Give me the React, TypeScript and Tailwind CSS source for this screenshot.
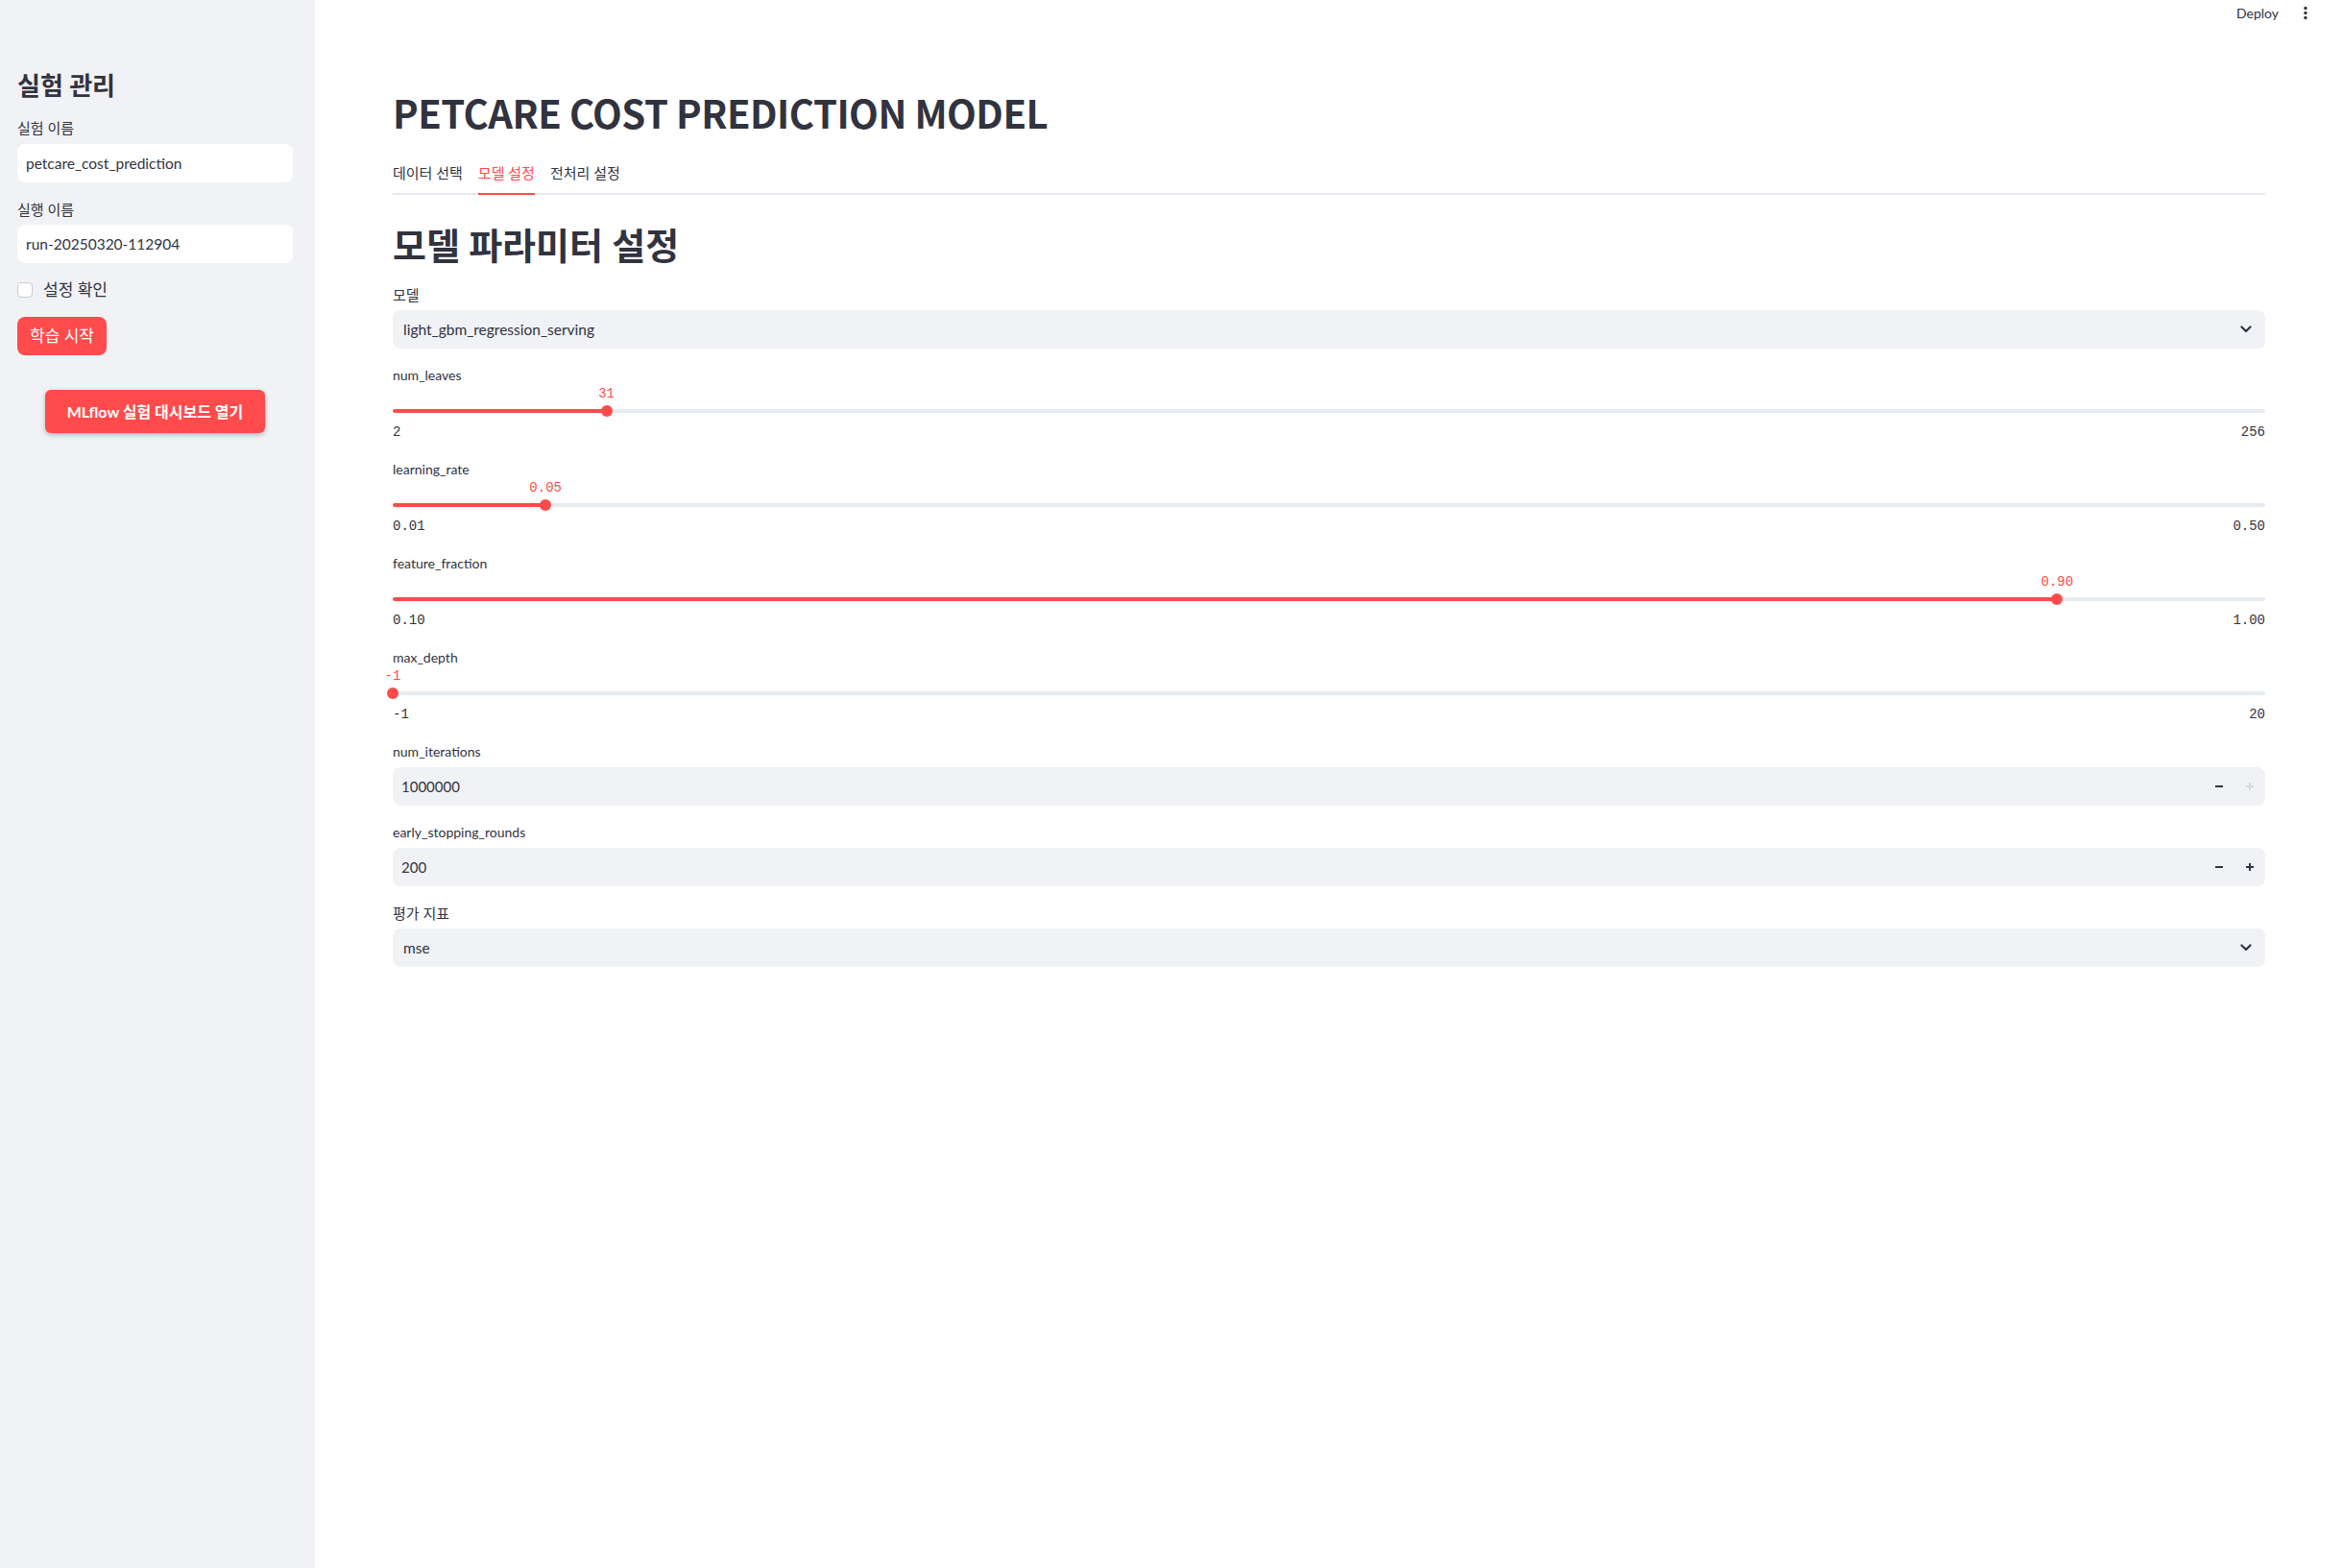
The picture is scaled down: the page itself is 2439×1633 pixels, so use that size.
import React from "react";

type SliderDef = {
  name: string;
  value: string;
  min: string;
  max: string;
  pct: number;
};

const sliders: SliderDef[] = [
  { name: "num_leaves", value: "31", min: "2", max: "256", pct: (31 - 2) / (256 - 2) },
  { name: "learning_rate", value: "0.05", min: "0.01", max: "0.50", pct: (0.05 - 0.01) / (0.5 - 0.01) },
  { name: "feature_fraction", value: "0.90", min: "0.10", max: "1.00", pct: (0.9 - 0.1) / (1 - 0.1) },
  { name: "max_depth", value: "-1", min: "-1", max: "20", pct: 0 },
];

const tabs = ["데이터 선택", "모델 설정", "전처리 설정"];

function Chevron() {
  return (
    <svg width="12" height="8" viewBox="0 0 12 8" fill="none">
      <path d="M1.5 1.5 6 6l4.5-4.5" stroke="#31333f" strokeWidth="2.2" strokeLinecap="round" strokeLinejoin="round" />
    </svg>
  );
}

function Minus({ color = "#31333f" }: { color?: string }) {
  return (
    <svg width="10" height="10" viewBox="0 0 10 10">
      <rect x="1" y="4" width="8" height="2" fill={color} />
    </svg>
  );
}

function Plus({ color = "#31333f" }: { color?: string }) {
  return (
    <svg width="10" height="10" viewBox="0 0 10 10">
      <rect x="1" y="4" width="8" height="2" fill={color} />
      <rect x="4" y="1" width="2" height="8" fill={color} />
    </svg>
  );
}

// korean labels run a bit wider in the reference than latin ones
function Label({ children, ko }: { children: React.ReactNode; ko?: boolean }) {
  return (
    <div
      className={
        ko
          ? "h-[20px] flex items-center text-[15px] leading-[20px] text-[#31333f]"
          : "h-[20px] flex items-center text-[14px] leading-[20px] text-[#31333f]"
      }
    >
      {children}
    </div>
  );
}

function SelectBox({ value }: { value: string }) {
  return (
    <div className="h-[40px] flex items-center justify-between rounded-lg bg-[#f0f2f6] pl-[11px] pr-[14px] mt-[6px]">
      <span className="text-[15.5px] leading-[20px] text-[#31333f]">{value}</span>
      <Chevron />
    </div>
  );
}

function NumberBox({ value, plusDisabled }: { value: string; plusDisabled?: boolean }) {
  return (
    <div className="h-[40px] flex items-center rounded-lg bg-[#f0f2f6] pl-[9px] mt-[6px]">
      <span className="flex-1 text-[15px] leading-[20px] text-[#31333f]">{value}</span>
      <div className="w-[32px] h-full flex items-center justify-center">
        <Minus />
      </div>
      <div className="w-[32px] h-full flex items-center justify-center">
        <Plus color={plusDisabled ? "#d5d8e0" : "#31333f"} />
      </div>
    </div>
  );
}

function Slider({ s }: { s: SliderDef }) {
  const left = `${s.pct * 100}%`;
  return (
    <div className="flex flex-col">
      <Label>{s.name}</Label>
      <div className="relative h-[16px]">
        <span
          className="absolute top-[1px] -translate-x-1/2 font-['Liberation_Mono',monospace] text-[14px] leading-[16px] text-[#ff4b4b] whitespace-nowrap"
          style={{ left }}
        >
          {s.value}
        </span>
      </div>
      <div className="h-[21px] flex items-center">
        <div className="relative h-[4px] w-full rounded-full bg-[#e6eaf1]">
          <div className="absolute left-0 top-0 h-full rounded-full bg-[#ff4b4b]" style={{ width: left }} />
          <div
            className="absolute top-1/2 size-[12px] -translate-x-1/2 -translate-y-1/2 rounded-full bg-[#ff4b4b]"
            style={{ left }}
          />
        </div>
      </div>
      <div className="h-[23px] flex items-center justify-between font-['Liberation_Mono',monospace] text-[14px] leading-[16px] text-[#31333f]">
        <span>{s.min}</span>
        <span>{s.max}</span>
      </div>
    </div>
  );
}

function Sidebar() {
  return (
    <aside className="w-[328px] shrink-0 bg-[#f0f2f6] pl-[18px] pr-[23px] pt-[71px] flex flex-col">
      <h2 className="h-[36px] flex items-center text-[26px] leading-[36px] font-bold text-[#31333f]">실험 관리</h2>

      <div className="mt-[16px]">
        <Label ko>실험 이름</Label>
      </div>
      <div className="mt-[7px] h-[40px] flex items-center rounded-lg bg-white px-[9px] text-[15.5px] leading-[20px] text-[#31333f]">
        petcare_cost_prediction
      </div>

      <div className="mt-[18px]">
        <Label ko>실행 이름</Label>
      </div>
      <div className="mt-[6px] h-[40px] flex items-center rounded-lg bg-white px-[9px] text-[15.5px] leading-[20px] text-[#31333f]">
        run-20250320-112904
      </div>

      <div className="mt-[16px] h-[24px] flex items-center gap-[11px]">
        <div className="size-[16px] rounded-[4px] border border-[#c7cad3] bg-white" />
        <span className="text-[17px] leading-[20px] text-[#31333f]">설정 확인</span>
      </div>

      <div className="mt-[16px]">
        <button className="h-[40px] w-[93px] rounded-lg bg-[#ff4b4b] text-[17px] leading-[20px] text-white">
          학습 시작
        </button>
      </div>

      <div className="mt-[36px] flex justify-center">
        <button className="h-[45px] w-[229px] rounded-md bg-[#ff4b4b] text-[16px] leading-[20px] font-bold text-white shadow-[0_2px_5px_rgba(0,0,0,0.25)]">
          MLflow 실험 대시보드 열기
        </button>
      </div>
    </aside>
  );
}

export default function App() {
  return (
    <div className="flex min-h-screen bg-white font-['Lato','Noto_Sans_CJK_KR',sans-serif] text-[#31333f]">
      <Sidebar />
      <main className="flex-1 flex flex-col">
        <div className="h-[27px] flex items-center justify-end gap-[20px] pr-[30px]">
          <span className="text-[14px] leading-[20px] text-[#31333f]">Deploy</span>
          <svg width="16" height="16" viewBox="0 0 16 16">
            <circle cx="8" cy="2.5" r="1.7" fill="#31333f" />
            <circle cx="8" cy="7.5" r="1.7" fill="#31333f" />
            <circle cx="8" cy="12.5" r="1.7" fill="#31333f" />
          </svg>
        </div>

        <div className="pl-[81px] pr-[80px] pt-[63px] flex flex-col">
          <h1 className="h-[55px] flex items-center font-['Noto_Sans_CJK_KR',sans-serif] text-[40px] leading-[55px] tracking-[-0.5px] font-bold text-[#31333f]">
            PETCARE COST PREDICTION MODEL
          </h1>

          <div className="mt-[16px] flex gap-[16px] border-b-2 border-[#e6e9ef]">
            {tabs.map((t) => (
              <div
                key={t}
                className={
                  t === "모델 설정"
                    ? "h-[42px] pt-[9px] -mb-[2px] border-b-2 border-[#ff4b4b] text-[15px] leading-[20px] text-[#ff4b4b]"
                    : "h-[42px] pt-[9px] -mb-[2px] border-b-2 border-transparent text-[15px] leading-[20px] text-[#31333f]"
                }
              >
                {t}
              </div>
            ))}
          </div>

          <h2 className="mt-[28px] h-[48px] flex items-center text-[38px] leading-[48px] font-bold text-[#31333f]">
            모델 파라미터 설정
          </h2>

          <div className="mt-[18px] flex flex-col gap-[18px]">
            <div className="flex flex-col">
              <Label ko>모델</Label>
              <SelectBox value="light_gbm_regression_serving" />
            </div>

            {sliders.map((s) => (
              <Slider key={s.name} s={s} />
            ))}

            <div className="flex flex-col">
              <Label>num_iterations</Label>
              <NumberBox value="1000000" plusDisabled />
            </div>

            <div className="flex flex-col">
              <Label>early_stopping_rounds</Label>
              <NumberBox value="200" />
            </div>

            <div className="flex flex-col">
              <Label ko>평가 지표</Label>
              <SelectBox value="mse" />
            </div>
          </div>
        </div>
      </main>
    </div>
  );
}
